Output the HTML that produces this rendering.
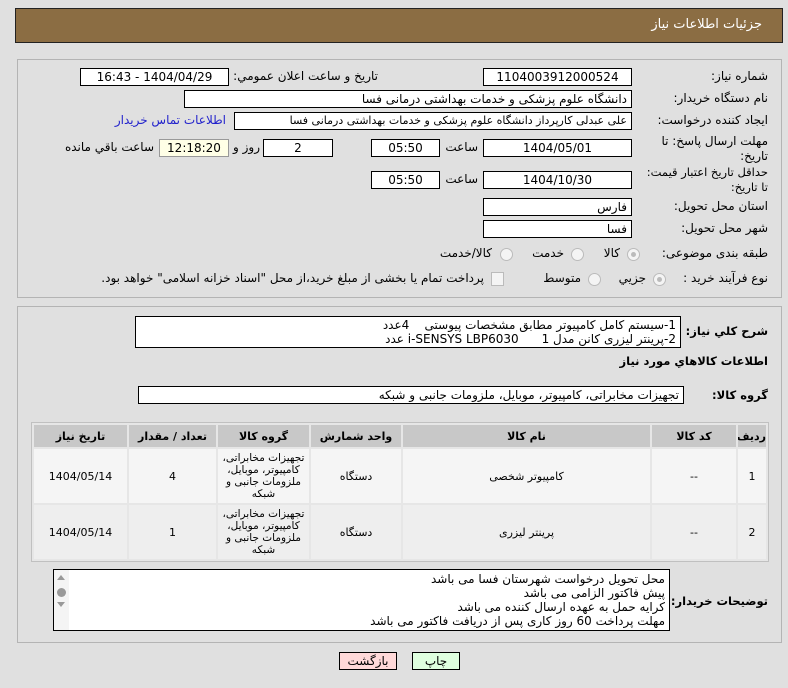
<!DOCTYPE html>
<html><head><meta charset="utf-8"><style>
body{margin:0;width:788px;height:688px;background:#e0e0e0;font-family:"DejaVu Sans","Liberation Sans",sans-serif;font-size:12px;color:#000;position:relative;overflow:hidden}
.a{position:absolute}
.lbl{position:absolute;direction:rtl;text-align:right;white-space:nowrap;font-size:12px;z-index:2}
.box{position:absolute;background:#fff;border:1px solid #000;box-sizing:border-box;direction:rtl;white-space:nowrap;line-height:16px;padding:0 4px;font-size:12px;overflow:hidden}
.c{text-align:center}
.rad{position:absolute;width:13px;height:13px;border-radius:50%;border:1px solid #bbb;background:#f4f4f4;box-sizing:border-box}
.rad.on::after{content:"";position:absolute;left:3px;top:3px;width:5px;height:5px;border-radius:50%;background:#bbb}
table{border-collapse:separate;border-spacing:2px;background:#e6e6e6;border:1px solid #c0c0c0;position:absolute;left:31px;top:422px;width:738px;direction:rtl;table-layout:fixed}
td,th{text-align:center;font-size:11px;padding:0;overflow:hidden}
th{background:#c8c8c8;height:22px}
.g{height:52px;overflow:hidden;line-height:12px;font-size:10.5px;display:flex;align-items:center;justify-content:center}
.b{font-weight:bold;font-size:11.5px}
</style></head><body>
<div class="a" style="left:15px;top:8px;width:768px;height:35px;background:#8b6d43;border:1px solid #222;box-sizing:border-box"></div>
<div class="lbl" style="right:26px;top:17px;color:#fff;font-size:13px">جزئیات اطلاعات نیاز</div>

<div class="a" style="left:17px;top:59px;width:765px;height:239px;border:1px solid #b4b4b4;box-sizing:border-box"></div>
<div class="a" style="left:17px;top:306px;width:765px;height:337px;border:1px solid #b4b4b4;box-sizing:border-box"></div>

<div class="lbl" style="right:20px;top:69px">شماره نیاز:</div>
<div class="box c" style="left:483px;top:68px;width:149px;height:18px">1104003912000524</div>
<div class="lbl" style="right:410px;top:69px">تاریخ و ساعت اعلان عمومي:</div>
<div class="box c" style="left:80px;top:68px;width:149px;height:18px">1404/04/29 - 16:43</div>

<div class="lbl" style="right:20px;top:91px">نام دستگاه خریدار:</div>
<div class="box" style="left:184px;top:90px;width:448px;height:18px">دانشگاه علوم پزشکی و خدمات بهداشتی درمانی فسا</div>

<div class="lbl" style="right:20px;top:113px">ایجاد کننده درخواست:</div>
<div class="box" style="left:234px;top:112px;width:398px;height:18px;font-size:11px">علی عبدلی کارپرداز دانشگاه علوم پزشکی و خدمات بهداشتی درمانی فسا</div>
<div class="lbl" style="right:562px;top:113px;color:#2222cc">اطلاعات تماس خریدار</div>

<div class="lbl" style="right:20px;top:134px;line-height:15px">مهلت ارسال پاسخ: تا<br>تاریخ:</div>
<div class="box c" style="left:483px;top:139px;width:149px;height:18px">1404/05/01</div>
<div class="lbl" style="right:310px;top:140px">ساعت</div>
<div class="box c" style="left:371px;top:139px;width:69px;height:18px">05:50</div>
<div class="box c" style="left:263px;top:139px;width:70px;height:18px">2</div>
<div class="lbl" style="right:528px;top:140px">روز و</div>
<div class="box c" style="left:159px;top:139px;width:70px;height:18px;background:#ffffe6;border-color:#999">12:18:20</div>
<div class="lbl" style="right:634px;top:140px">ساعت باقي مانده</div>

<div class="lbl" style="right:20px;top:165px;line-height:15px;font-size:11.5px">حداقل تاریخ اعتبار قیمت:<br>تا تاریخ:</div>
<div class="box c" style="left:483px;top:171px;width:149px;height:18px">1404/10/30</div>
<div class="lbl" style="right:310px;top:172px">ساعت</div>
<div class="box c" style="left:371px;top:171px;width:69px;height:18px">05:50</div>

<div class="lbl" style="right:20px;top:199px">استان محل تحویل:</div>
<div class="box" style="left:483px;top:198px;width:149px;height:18px">فارس</div>
<div class="lbl" style="right:20px;top:221px">شهر محل تحویل:</div>
<div class="box" style="left:483px;top:220px;width:149px;height:18px">فسا</div>

<div class="lbl" style="right:20px;top:246px">طبقه بندی موضوعی:</div>
<div class="rad on" style="left:627px;top:248px"></div><div class="lbl" style="right:168px;top:246px">کالا</div>
<div class="rad" style="left:571px;top:248px"></div><div class="lbl" style="right:224px;top:246px">خدمت</div>
<div class="rad" style="left:500px;top:248px"></div><div class="lbl" style="right:296px;top:246px">کالا/خدمت</div>

<div class="lbl" style="right:20px;top:271px">نوع فرآیند خرید :</div>
<div class="rad on" style="left:653px;top:273px"></div><div class="lbl" style="right:142px;top:271px">جزيي</div>
<div class="rad" style="left:588px;top:273px"></div><div class="lbl" style="right:207px;top:271px">متوسط</div>
<div class="a" style="left:491px;top:272px;width:11px;height:12px;border:1px solid #bbb;background:#f4f4f4"></div>
<div class="lbl" style="right:304px;top:271px">پرداخت تمام یا بخشی از مبلغ خرید،از محل "اسناد خزانه اسلامی" خواهد بود.</div>

<div class="lbl b" style="right:20px;top:324px">شرح کلي نیاز:</div>
<div class="box" style="left:135px;top:316px;width:546px;height:32px;line-height:14px;padding-top:1px">1-سیستم کامل کامپیوتر مطابق مشخصات پیوستی &nbsp;&nbsp; 4عدد<br>2-پرینتر لیزری کانن مدل 1 &nbsp;&nbsp;&nbsp;&nbsp; i-SENSYS LBP6030 عدد</div>
<div class="lbl b" style="right:20px;top:354px">اطلاعات کالاهاي مورد نیاز</div>

<div class="lbl b" style="right:20px;top:388px">گروه کالا:</div>
<div class="box" style="left:138px;top:386px;width:546px;height:18px">تجهیزات مخابراتی، کامپیوتر، موبایل، ملزومات جانبی و شبکه</div>

<table>
<colgroup><col style="width:28px"><col style="width:84px"><col style="width:247px"><col style="width:90px"><col style="width:91px"><col style="width:87px"><col></colgroup>
<tr><th>ردیف</th><th>کد کالا</th><th>نام کالا</th><th>واحد شمارش</th><th>گروه کالا</th><th>تعداد / مقدار</th><th>تاریخ نیاز</th></tr>
<tr style="background:#f5f5f5;height:54px"><td>1</td><td>--</td><td>کامپیوتر شخصی</td><td>دستگاه</td><td><div class="g">تجهیزات مخابراتی، کامپیوتر، موبایل، ملزومات جانبی و شبکه</div></td><td>4</td><td>1404/05/14</td></tr>
<tr style="background:#eeeeee;height:54px"><td>2</td><td>--</td><td>پرینتر لیزری</td><td>دستگاه</td><td><div class="g">تجهیزات مخابراتی، کامپیوتر، موبایل، ملزومات جانبی و شبکه</div></td><td>1</td><td>1404/05/14</td></tr>
</table>

<div class="lbl b" style="right:20px;top:594px">توضیحات خریدار:</div>
<div class="box" style="left:53px;top:569px;width:617px;height:62px;line-height:14px;padding-top:2px">محل تحویل درخواست شهرستان فسا می باشد<br>پیش فاکتور الزامی می باشد<br>کرایه حمل به عهده ارسال کننده می باشد<br>مهلت پرداخت 60 روز کاری پس از دریافت فاکتور می باشد</div>
<div class="a" style="left:54px;top:570px;width:15px;height:60px;background:#f4f4f4"></div>
<div class="a" style="left:57px;top:575px;width:0;height:0;border-left:4px solid transparent;border-right:4px solid transparent;border-bottom:5px solid #999"></div>
<div class="a" style="left:57px;top:588px;width:9px;height:9px;border-radius:50%;background:#999"></div>
<div class="a" style="left:57px;top:602px;width:0;height:0;border-left:4px solid transparent;border-right:4px solid transparent;border-top:5px solid #999"></div>

<div class="a c" style="left:339px;top:652px;width:58px;height:18px;background:#ffd9d9;border:1px solid #000;box-sizing:border-box;line-height:16px;font-size:12px">بازگشت</div>
<div class="a c" style="left:412px;top:652px;width:48px;height:18px;background:#dfffdf;border:1px solid #000;box-sizing:border-box;line-height:16px;font-size:12px">چاپ</div>
</body></html>
